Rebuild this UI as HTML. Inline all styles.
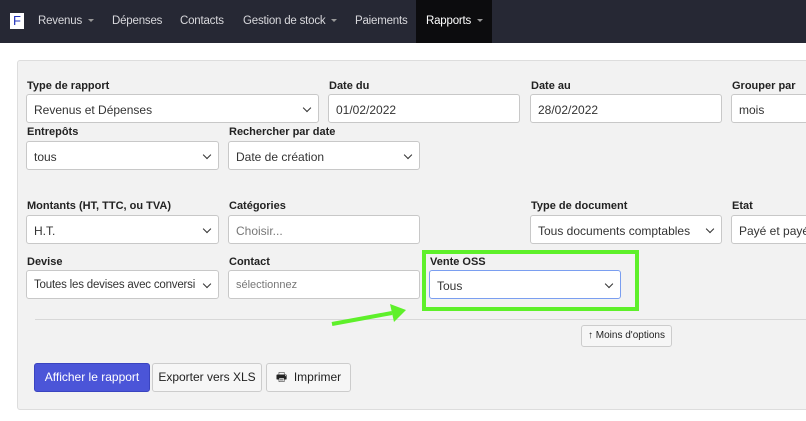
<!DOCTYPE html><html><head><style>
body{margin:0;width:806px;height:421px;overflow:hidden;background:#fff;font-family:"Liberation Sans",sans-serif;position:relative}
.nav{position:absolute;left:0;top:0;width:806px;height:43px;background:#262834}
.nav span{position:absolute;top:15px;color:#d8d8dc;font-size:11.5px;letter-spacing:-0.2px}
.car{display:inline-block;border-left:3px solid transparent;border-right:3px solid transparent;border-top:3px solid #999;vertical-align:middle;margin-left:6px}
.act{position:absolute;left:416px;top:0;width:76px;height:43px;background:#0c0c0e}
.panel{position:absolute;left:17px;top:60px;width:800px;height:348px;background:#f2f2f2;border:1px solid #ddd;border-radius:3px}
.l{position:absolute;font-size:11px;font-weight:bold;color:#222}
.i{position:absolute;height:29px;background:#fff;border:1px solid #c8c8c8;border-radius:3px;box-sizing:border-box;font-size:12px;color:#333;padding:8px 7px;white-space:nowrap;overflow:hidden}
.s::after{content:"";position:absolute;right:8px;top:10px;width:5px;height:5px;border-right:1.6px solid #333;border-bottom:1.6px solid #333;transform:rotate(45deg)}
.b{position:absolute;top:363px;height:29px;box-sizing:border-box;border:1px solid #ccc;border-radius:3px;background:#f6f6f6;font-size:12px;color:#222;text-align:center;line-height:27px}
</style></head><body>
<div class="nav">
<div style="position:absolute;left:10px;top:13px;width:14px;height:16px;background:#fff;color:#2233bb;font-size:13px;text-align:center;line-height:16px">F</div>
<div class="act"></div>
<span style="left:38px">Revenus<i class="car"></i></span>
<span style="left:112px">Dépenses</span>
<span style="left:180px">Contacts</span>
<span style="left:243px">Gestion de stock<i class="car"></i></span>
<span style="left:355px">Paiements</span>
<span style="left:426px;color:#fff">Rapports<i class="car"></i></span>
</div>
<div class="panel"></div>
<div class="l" style="left:27px;top:80px">Type de rapport</div>
<div class="i s" style="left:26px;top:94px;width:293px">Revenus et Dépenses</div>
<div class="l" style="left:329px;top:80px">Date du</div>
<div class="i" style="left:328px;top:94px;width:192px">01/02/2022</div>
<div class="l" style="left:531px;top:80px">Date au</div>
<div class="i" style="left:530px;top:94px;width:192px">28/02/2022</div>
<div class="l" style="left:732px;top:80px">Grouper par</div>
<div class="i" style="left:731px;top:94px;width:90px">mois</div>
<div class="l" style="left:27px;top:126px">Entrepôts</div>
<div class="i s" style="left:26px;top:141px;width:193px">tous</div>
<div class="l" style="left:229px;top:126px">Rechercher par date</div>
<div class="i s" style="left:228px;top:141px;width:192px">Date de création</div>
<div class="l" style="left:27px;top:200px">Montants (HT, TTC, ou TVA)</div>
<div class="i s" style="left:26px;top:215px;width:193px">H.T.</div>
<div class="l" style="left:229px;top:200px">Catégories</div>
<div class="i" style="left:228px;top:215px;width:192px;color:#777">Choisir...</div>
<div class="l" style="left:531px;top:200px">Type de document</div>
<div class="i s" style="left:530px;top:215px;width:192px">Tous documents comptables</div>
<div class="l" style="left:732px;top:200px">Etat</div>
<div class="i" style="left:731px;top:215px;width:90px">Payé et payé</div>
<div class="l" style="left:27px;top:256px">Devise</div>
<div class="i s" style="left:26px;top:270px;width:193px"><div style="width:163px;overflow:hidden;font-size:11.5px;letter-spacing:-0.2px">Toutes les devises avec conversi</div></div>
<div class="l" style="left:229px;top:256px">Contact</div>
<div class="i" style="left:228px;top:270px;width:192px;color:#777;font-size:11px">sélectionnez</div>
<div style="position:absolute;left:422px;top:250px;width:209px;height:53px;border:4px solid #5ef02a"></div>
<div class="l" style="left:430px;top:256px">Vente OSS</div>
<div class="i s" style="left:429px;top:270px;width:192px;border-color:#7a9ef0">Tous</div>
<div style="position:absolute;left:35px;top:319px;width:771px;height:1px;background:#d8d8d8"></div>
<svg style="position:absolute;left:0;top:0" width="806" height="421"><line x1="332" y1="324" x2="392" y2="313" stroke="#5ef02a" stroke-width="4"/><polygon points="406,310 390,304 394,322" fill="#5ef02a"/></svg>
<div class="b" style="left:581px;top:325px;width:91px;height:22px;line-height:20px;font-size:10px">↑ Moins d'options</div>
<div class="b" style="left:34px;width:116px;background:#4b55d8;border-color:#3a44c0;color:#fff">Afficher le rapport</div>
<div class="b" style="left:152px;width:110px">Exporter vers XLS</div>
<div class="b" style="left:266px;width:85px">🖶&nbsp; Imprimer</div>
</body></html>
